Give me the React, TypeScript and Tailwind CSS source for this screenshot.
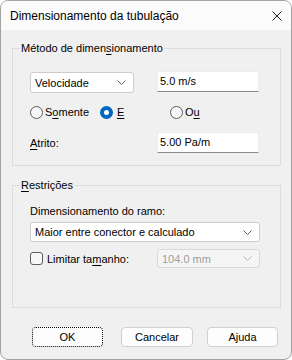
import type { ReactNode } from 'react'

function Chevron({ color = '#606060' }: { color?: string }) {
  return (
    <svg width="9" height="5" viewBox="0 0 9 5" fill="none">
      <path d="M0.5 0.5 L4.5 4.5 L8.5 0.5" stroke={color} strokeWidth="1" />
    </svg>
  )
}

function Combo({ value, width, disabled = false }: { value: string; width: string; disabled?: boolean }) {
  return (
    <div
      className={`${width} flex items-center justify-between rounded-[3px] border pl-[4px] pr-[7px] ${
        disabled ? 'border-[#d9d9d9] bg-[#f5f5f5] text-[#9d9d9d]' : 'border-[#cccccc] bg-white text-black'
      }`}
    >
      <span>{value}</span>
      <Chevron color={disabled ? '#b5b5b5' : '#606060'} />
    </div>
  )
}

function TextField({ value }: { value: string }) {
  return (
    <div className="flex h-[21px] w-[102px] items-center border border-[#ececec] border-b-[#8a8a8a] bg-white pl-[2px] pb-[2px]">
      {value}
    </div>
  )
}

function Radio({ checked = false, children }: { checked?: boolean; children: ReactNode }) {
  return (
    <div className="flex items-center gap-[2px]">
      {checked ? (
        <span className="flex h-[13px] w-[13px] items-center justify-center rounded-full bg-[#0067c0]">
          <span className="h-[5px] w-[5px] rounded-full bg-white" />
        </span>
      ) : (
        <span className="h-[13px] w-[13px] rounded-full border border-[#5c5c5c] bg-[#f7f7f7]" />
      )}
      <span>{children}</span>
    </div>
  )
}

function Button({ children, width, focused = false }: { children: ReactNode; width: string; focused?: boolean }) {
  return (
    <div
      className={`${width} flex h-[20px] items-center justify-center rounded-[4px] border bg-[#fdfdfd] ${
        focused ? 'border-dotted border-black' : 'border-[#d0d0d0]'
      }`}
    >
      {children}
    </div>
  )
}

export default function App() {
  return (
    <div className="flex h-[360px] w-[292px] flex-col overflow-hidden rounded-[8px] border border-[#a3a3a3] bg-[#f0f0f0] font-['Liberation_Sans',Arial,sans-serif] text-[11px] leading-[16px] text-black">
      <div className="flex h-[29px] shrink-0 items-center justify-between bg-[#fbfbfb] pl-[9px] pr-[8px] text-[12px]">
        <span>Dimensionamento da tubulação</span>
        <svg width="10" height="10" viewBox="0 0 10 10" fill="none" className="mr-[1px]">
          <path d="M0.5 0.5 L9.5 9.5 M9.5 0.5 L0.5 9.5" stroke="#1a1a1a" strokeWidth="1" />
        </svg>
      </div>

      <div className="flex flex-1 flex-col pl-[11px] pt-[10px]">
        <fieldset className="w-[269px] border border-[#dcdcdc] px-[17px] pb-[12px] pt-[15px]">
          <legend className="-ml-[10px] px-[1px]">
            Método de dimen<u className="underline-offset-[2px]">s</u>ionamento
          </legend>
          <div className="flex items-start">
            <div className="mt-[1px] flex h-[21px]">
              <Combo value="Velocidade" width="w-[104px]" />
            </div>
            <div className="ml-[23px]">
              <TextField value="5.0 m/s" />
            </div>
          </div>
          <div className="mt-[11px] flex h-[16px] items-center">
            <div className="w-[70px]">
              <Radio>
                S<u className="underline-offset-[2px]">o</u>mente
              </Radio>
            </div>
            <div className="w-[70px]">
              <Radio checked>
                <span className="ml-[2px]">
                  <u className="underline-offset-[2px]">E</u>
                </span>
              </Radio>
            </div>
            <Radio>
              O<u className="underline-offset-[2px]">u</u>
            </Radio>
          </div>
          <div className="mt-[12px] flex items-center">
            <span className="w-[127px]">
              <u className="underline-offset-[2px]">A</u>trito:
            </span>
            <TextField value="5.00 Pa/m" />
          </div>
        </fieldset>

        <fieldset className="mt-[11px] w-[269px] border border-[#dcdcdc] px-[17px] pb-[39px] pt-[10px]">
          <legend className="-ml-[10px] px-[1px]">
            <u className="underline-offset-[2px]">R</u>estrições
          </legend>
          <div>Dimensionamento do ramo:</div>
          <div className="mt-[3px] flex h-[20px]">
            <Combo value="Maior entre conector e calculado" width="w-[230px]" />
          </div>
          <div className="mt-[7px] flex items-center">
            <div className="flex w-[127px] items-center gap-[4px]">
              <span className="h-[13px] w-[13px] rounded-[3px] border border-[#5c5c5c] bg-[#f7f7f7]" />
              <span>
                Limitar ta<u className="underline-offset-[2px]">m</u>anho:
              </span>
            </div>
            <div className="flex h-[19px]">
              <Combo value="104.0 mm" width="w-[103px]" disabled />
            </div>
          </div>
        </fieldset>

        <div className="mt-[19px] flex">
          <div className="ml-[20px]">
            <Button width="w-[71px]" focused>
              OK
            </Button>
          </div>
          <div className="ml-[18px]">
            <Button width="w-[72px]">Cancelar</Button>
          </div>
          <div className="ml-[14px]">
            <Button width="w-[71px]">Ajuda</Button>
          </div>
        </div>
      </div>
    </div>
  )
}
